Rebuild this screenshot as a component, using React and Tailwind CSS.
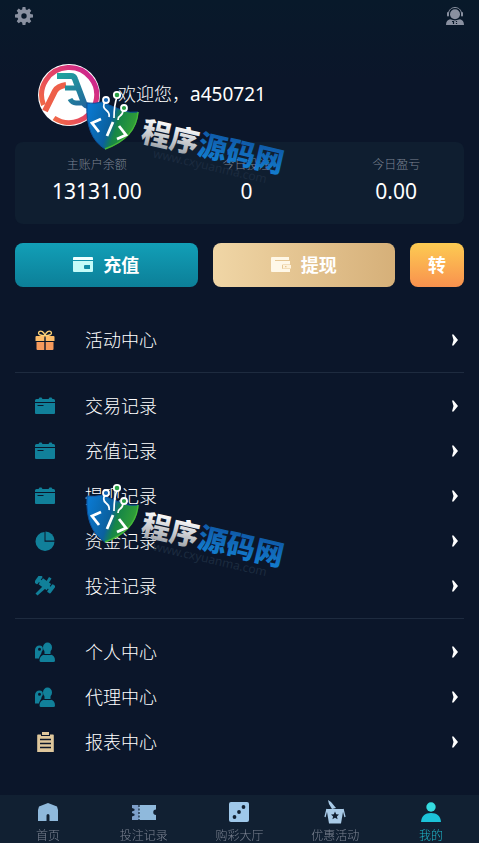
import { useId } from "react";

const stats = [
  { label: "主账户余额", value: "13131.00" },
  { label: "今日投注", value: "0" },
  { label: "今日盈亏", value: "0.00" },
];

const menuGroups = [
  [{ label: "活动中心", icon: GiftIcon }],
  [
    { label: "交易记录", icon: CardIcon },
    { label: "充值记录", icon: CardIcon },
    { label: "提现记录", icon: CardIcon },
    { label: "资金记录", icon: PieIcon },
    { label: "投注记录", icon: GavelIcon },
  ],
  [
    { label: "个人中心", icon: UsersIcon },
    { label: "代理中心", icon: UsersIcon },
    { label: "报表中心", icon: ClipboardIcon },
  ],
];

const tabs = [
  { label: "首页", icon: HomeIcon },
  { label: "投注记录", icon: TicketIcon },
  { label: "购彩大厅", icon: DiceIcon },
  { label: "优惠活动", icon: PromoIcon },
  { label: "我的", icon: PersonIcon, active: true },
];

function GearIcon() {
  return (
    <svg viewBox="0 0 18 18" className="size-[18px] fill-[#8990a0]">
      <path
        fillRule="evenodd"
        d="M7.6 0h2.8l.4 2.5 1.3.5 2-1.5 2.2 2.2-1.5 2 .6 1.4 2.6.5v2.8l-2.6.4-.6 1.3 1.5 2.1-2.2 2.1-2-1.5-1.3.6-.4 2.6H7.6l-.5-2.6-1.3-.6-2.1 1.5-2-2.1 1.5-2.1-.6-1.3L0 10.4V7.6l2.6-.5.6-1.4-1.5-2 2-2.2 2.1 1.5 1.3-.5zM9 6.3a2.7 2.7 0 1 0 0 5.4 2.7 2.7 0 0 0 0-5.4z"
      />
    </svg>
  );
}

function ServiceIcon() {
  return (
    <svg viewBox="0 0 18 18" className="size-[18px] fill-[#8990a0]">
      <circle cx="9" cy="7.2" r="5" />
      <path d="M2.5 6.5C3-1.500 15-1.500 15.500 6.500" fill="none" stroke="#8990a0" strokeWidth="1" />
      <rect x="1" y="5" width="2" height="4.5" rx="1" />
      <rect x="15" y="5" width="2" height="4.5" rx="1" />
      <path d="M0 18c0-3.500 1.500-5.300 4-5.800L9 13.500l5-1.300c2.500.5 4 2.300 4 5.800z" />
      <path d="M6 14.500h1.500V17M10.500 14v1M10.500 16v1" fill="none" stroke="#08192a" strokeWidth="1.2" />
    </svg>
  );
}

function WalletIcon() {
  return (
    <svg viewBox="0 0 20 16" className="h-4 w-5">
      <path fill="#f0ffff" d="M1 0h18a1 1 0 0 1 1 1v2H0V1a1 1 0 0 1 1-1z" />
      <path
        fill="#c4fbf8"
        fillRule="evenodd"
        d="M0 4h20v10a1 1 0 0 1-1 1H1a1 1 0 0 1-1-1zM12 8a1 1 0 0 0-1 1v2a1 1 0 0 0 1 1h5V8z"
      />
    </svg>
  );
}

function PurseIcon() {
  return (
    <svg viewBox="0 0 20 16" className="h-4 w-5">
      <path fill="#fff8e8" d="M1 0h17v3H4v1h15v3.500h-7a1 1 0 0 0-1 1V11a1 1 0 0 0 1 1h7v3H1a1 1 0 0 1-1-1V1a1 1 0 0 1 1-1z" />
      <path fill="#fff3dc" fillRule="evenodd" d="M12 8h8v3.500h-8zM14 9v1.300h1.500V9z" />
    </svg>
  );
}

function GiftIcon() {
  return (
    <svg viewBox="0 0 20 20" className="size-5">
      <path
        d="M10 5.500C5 6 2.500 4 4 1.800 6 0 9 2 10 5.500c1-3.500 4-5.500 6-3.700C17.500 4 15 6 10 5.500z"
        fill="none"
        stroke="#fcd277"
        strokeWidth="1.3"
      />
      <path fill="#fdbd6a" d="M1.500 6H9.300v5H.5V7a1 1 0 0 1 1-1zM10.700 6h7.800a1 1 0 0 1 1 1v4h-8.800z" />
      <path fill="#f79a5c" d="M1.500 12h7.800v8H2.500a1 1 0 0 1-1-1zM10.700 12h7.800v7a1 1 0 0 1-1 1h-6.800z" />
    </svg>
  );
}

function CardIcon() {
  return (
    <svg viewBox="0 0 20 20" className="size-5 fill-[#11809a]">
      <path d="M1.500 3h2l1-1.500h2L7.500 3h6l1-1.500h2L17.500 3h1A1.500 1.500 0 0 1 20 4.500V6H0V4.500A1.500 1.500 0 0 1 1.500 3z" />
      <path fillRule="evenodd" d="M0 7h20v10a1 1 0 0 1-1 1H1a1 1 0 0 1-1-1zM2.500 9v1h6V9z" />
    </svg>
  );
}

function PieIcon() {
  return (
    <svg viewBox="0 0 20 20" className="size-5 fill-[#11809a]">
      <path d="M9.500 1v9.700h10A9.500 9.500 0 1 1 9.500 1z" />
      <path d="M10.500.5a9 9 0 0 1 9 9h-9z" />
    </svg>
  );
}

function GavelIcon() {
  return (
    <svg viewBox="0 0 20 20" className="size-5 fill-[#11809a]">
      <path d="M8.500 9.500 11 12l-8.500 7.500L.5 17.500z" />
      <g transform="rotate(36 10 8)">
        <rect x="5" y="4.500" width="10" height="7.500" />
        <rect x="0" y="3.500" width="4" height="9.500" rx="1" />
        <rect x="16" y="3.500" width="4" height="9.500" rx="1" />
        <path d="M3 7h14v3H3z" />
      </g>
      <path d="m11 6 3-5 2.500 1.500-3 5z" />
    </svg>
  );
}

function UsersIcon() {
  return (
    <svg viewBox="0 0 20 20" className="size-5 fill-[#11809a]">
      <path
        fillRule="evenodd"
        d="M4.500 3.500C7 3.500 8 5 7.800 7c0 1.500-.8 2.500-1.300 3 .5 1.500-2 3.500-2.500 6.500H0V8c0-2.500 2-4.500 4.500-4.500zM4.500 5.800a1.500 1.500 0 1 0 0 3 1.500 1.500 0 0 0 0-3z"
      />
      <ellipse cx="12.500" cy="5.500" rx="4.500" ry="5" />
      <path d="M9.500 9h6v4l-3 1.500-3-1.500z" />
      <path d="M4.500 18.500c0-3.500 2-5.500 5-6l3 1.500 3-1.500c3 .5 4.500 2.500 4.500 6q0 1.500-1.500 1.500H6q-1.500 0-1.500-1.500z" />
      <path d="M9 12.500h7" stroke="#0b162a" strokeWidth="1" />
    </svg>
  );
}

function ClipboardIcon() {
  return (
    <svg viewBox="0 0 20 20" className="size-5">
      <path fill="#dfc79c" d="M3 2.500h3V4h9V2.500h3a.8.8 0 0 1 .8.800V20H2.200V3.300A.8.8 0 0 1 3 2.500zM7 0h7v3H7z" />
      <path d="M5 7.500h11M5 11.500h11M5 15.500h11" stroke="#0b162a" strokeWidth="1.6" />
    </svg>
  );
}

function ChevronIcon() {
  return (
    <svg viewBox="0 0 6 12" className="h-3 w-[6px] fill-white">
      <path d="M0 .5h1.500L6 6l-4.500 5.500H0L1.500 6z" />
    </svg>
  );
}

function HomeIcon() {
  return (
    <svg viewBox="0 0 20 20" className="size-5 fill-[#8fb9dc]">
      <path d="M10 1 19 4.500 20 8v11h-8.500v-5.500a1.500 1.500 0 0 0-3 0V19H0V8l1-3.500z" />
    </svg>
  );
}

function TicketIcon() {
  return (
    <svg viewBox="0 0 26 20" className="h-5 w-[26px]">
      <path fill="#7d9fca" d="M1 3h7v15H1v-3.500l2.500-1v-1.500L1 11V9.500l2.500-1V7L1 6z" />
      <path fill="#8fb9dc" d="M8 3h17v4.500a2.500 2.500 0 0 0 0 5.500v5H8z" />
      <path d="M8 3v15" stroke="#112032" strokeWidth="1.2" strokeDasharray="2 1.5" />
    </svg>
  );
}

function DiceIcon() {
  return (
    <svg viewBox="0 0 20 20" className="size-5">
      <rect width="20" height="20" rx="2" fill="#9fc8ea" />
      <g fill="#112032">
        <circle cx="14.5" cy="5" r="1.9" />
        <circle cx="10" cy="10" r="1.9" />
        <circle cx="5.5" cy="15" r="1.9" />
      </g>
    </svg>
  );
}

function PromoIcon() {
  return (
    <svg viewBox="0 0 22 24" className="h-6 w-[22px]">
      <path fill="#a9cbe8" d="M4 0 7 2l5 6-4 1-3-5z" />
      <path d="M3 9 1 17M19 9l2 8" stroke="#a9cbe8" strokeWidth="1.3" />
      <path fill="#a9cbe8" d="M2.500 9h17L17 23.500H5z" />
      <path fill="#112032" d="m11 11.500 1.200 2.700 2.800.3-2.100 1.900.7 2.900-2.600-1.500-2.600 1.500.7-2.900L7 14.500l2.800-.3z" />
    </svg>
  );
}

function PersonIcon() {
  return (
    <svg viewBox="0 0 20 20" className="size-5">
      <circle cx="10" cy="5" r="4.7" fill="#35dbe0" />
      <path fill="#1cc3d9" d="M0 20c.5-6 4-9 10-9s9.500 3 10 9z" />
    </svg>
  );
}

function Avatar() {
  return (
    <svg viewBox="0 0 62 62" className="size-[62px] shrink-0" role="img" aria-label="头像">
      <defs>
        <linearGradient id="ring" x1="0" y1="1" x2="1" y2="0.2">
          <stop offset="0" stopColor="#f5793c" />
          <stop offset="0.45" stopColor="#e84c5c" />
          <stop offset="1" stopColor="#cc2590" />
        </linearGradient>
        <linearGradient id="mark" gradientUnits="userSpaceOnUse" x1="19" y1="10" x2="50" y2="44">
          <stop offset="0" stopColor="#20a79e" />
          <stop offset="1" stopColor="#23639c" />
        </linearGradient>
      </defs>
      <circle cx="31" cy="31" r="31" fill="#fff" />
      <path d="M16 54A27.500 27.500 0 1 0 5.500 41" fill="none" stroke="url(#ring)" strokeWidth="5" />
      <path d="M7 47 17 27q3-5 11-6" fill="none" stroke="#ee5f49" strokeWidth="6" />
      <g fill="none" stroke="url(#mark)" strokeWidth="5">
        <path d="M19 12h14q3 0 4 3l9 24q1 3 6 3" strokeWidth="6" />
        <path d="M27 24h13M32 35q2 4 6 4h10" />
      </g>
    </svg>
  );
}

function Watermark({ className }) {
  const id = useId();

  return (
    <svg viewBox="0 0 220 112" className={`pointer-events-none absolute left-20 h-28 w-[220px] ${className}`}>
      <defs>
        <linearGradient id={`${id}shield`} x1="0" y1="0.3" x2="1" y2="0.6">
          <stop offset="0" stopColor="#0a78cf" />
          <stop offset="0.45" stopColor="#0b609f" />
          <stop offset="0.6" stopColor="#168647" />
          <stop offset="1" stopColor="#38a532" />
        </linearGradient>
        <linearGradient id={`${id}silver`} x1="0" y1="0" x2="0" y2="1">
          <stop offset="0.2" stopColor="#ffffff" />
          <stop offset="1" stopColor="#8f959d" />
        </linearGradient>
        <linearGradient id={`${id}blue`} x1="0" y1="0" x2="0" y2="1">
          <stop offset="0.2" stopColor="#0f58a6" />
          <stop offset="1" stopColor="#1484d6" />
        </linearGradient>
      </defs>
      <path
        d="M7 15q8 1 15-1l12 5 10 4q6 2 14 1-2 26-33 37Q5 49 7 15z"
        fill={`url(#${id}shield)`}
        stroke="#0a4f9b"
        strokeWidth="1"
      />
      <path d="M58 24q-2 26-33 37" fill="none" stroke="#46b934" strokeWidth="1.5" />
      <g fill="none" stroke="#fff" strokeWidth="1.7">
        <path d="M25 14q-3 5 1 8 4 3 3 7M37 9q-3 8-3 21M43 22q0 4-3 6-2 1-2 4" />
      </g>
      <g stroke="#fff" strokeWidth="1.8">
        <circle cx="26" cy="12" r="3" fill="#1465b5" />
        <circle cx="37" cy="7" r="3.2" fill="#28a044" />
        <circle cx="44" cy="20" r="3" fill="#28a044" />
      </g>
      <path d="m21 31-9 4 7 9M33 34l-6 14M39 38l7 9-9 4" fill="none" stroke="#fff" strokeWidth="2.8" />
      <g transform="rotate(13 60 52)" fontFamily="'Noto Sans CJK SC', sans-serif">
        <text x="60" y="53" fontSize="29" fontWeight="900" fill={`url(#${id}silver)`}>
          程序
        </text>
        <text x="118" y="53" fontSize="29" fontWeight="900" fill={`url(#${id}blue)`}>
          源码网
        </text>
        <text x="76" y="66" fontSize="12" fill="#1c2b3f" fontFamily="'Noto Sans', sans-serif">
          www.cxyuanma.com
        </text>
      </g>
    </svg>
  );
}

export default function App() {
  return (
    <div className="relative min-h-screen bg-[#0b162a] bg-linear-to-b from-[#08192a] to-[#0b162a] to-[80px] pb-12 font-['Noto_Sans','Noto_Sans_CJK_SC',sans-serif] text-white">
      <header className="flex h-8 items-center justify-between px-[15px]">
        <button aria-label="设置">
          <GearIcon />
        </button>
        <button aria-label="客服">
          <ServiceIcon />
        </button>
      </header>

      <main className="px-[15px] pt-8">
        <section className="flex items-center gap-[18px] pl-[23px]">
          <Avatar />
          <p className="text-lg font-light">
            欢迎您，<span className="text-[19px] font-normal">a450721</span>
          </p>
        </section>

        <section className="mt-4 rounded-lg bg-[#0f1e30] pt-[13px] pb-[17px]">
          <dl className="-mr-[7px] ml-[7px] grid grid-cols-3 text-center">
            {stats.map((stat) => (
              <div key={stat.label}>
                <dt className="text-xs leading-5 font-light text-[#7d8493]">{stat.label}</dt>
                <dd className="text-[21px] leading-8">{stat.value}</dd>
              </div>
            ))}
          </dl>
        </section>

        <div className="mt-[19px] flex gap-[15px] text-lg font-bold">
          <button className="flex h-11 flex-1 items-center justify-center gap-[10px] rounded-lg bg-linear-to-b from-[#129fb7] to-[#0c7f98]">
            <WalletIcon />
            充值
          </button>
          <button className="flex h-11 flex-1 items-center justify-center gap-[10px] rounded-lg bg-linear-to-r from-[#f0d6a6] to-[#d6b079]">
            <PurseIcon />
            提现
          </button>
          <button className="h-11 w-[54px] rounded-lg bg-linear-to-b from-[#fccb52] to-[#f8914e]">转</button>
        </div>

        <nav className="mt-5">
          {menuGroups.map((group) => (
            <ul key={group[0].label} className="border-b border-[#1e2b3f] py-[10px] last:border-b-0">
              {group.map(({ label, icon: Icon }) => (
                <li key={label}>
                  <a href="#" className="flex h-[45px] items-center pr-[6px] pl-5">
                    <Icon />
                    <span className="ml-[30px] flex-1 text-lg font-light">{label}</span>
                    <ChevronIcon />
                  </a>
                </li>
              ))}
            </ul>
          ))}
        </nav>
      </main>

      <nav className="fixed inset-x-0 bottom-0 grid h-12 grid-cols-5 bg-[#112032]">
        {tabs.map(({ label, icon: Icon, active }) => (
          <a
            key={label}
            href="#"
            className={`flex flex-col items-center pt-[5px] text-xs leading-3 font-light ${active ? "text-[#1fb5c9]" : "text-[#7d8493]"}`}
          >
            <span className="flex h-6 items-center">
              <Icon />
            </span>
            <span className="mt-[6px]">{label}</span>
          </a>
        ))}
      </nav>

      <Watermark className="top-[88px]" />
      <Watermark className="top-[481px]" />
    </div>
  );
}
